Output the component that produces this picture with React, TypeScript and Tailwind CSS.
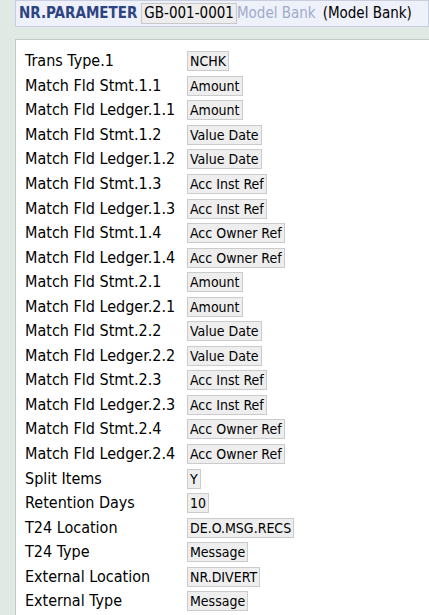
import React from "react";

const rows: [string, string][] = [
  ["Trans Type.1", "NCHK"],
  ["Match Fld Stmt.1.1", "Amount"],
  ["Match Fld Ledger.1.1", "Amount"],
  ["Match Fld Stmt.1.2", "Value Date"],
  ["Match Fld Ledger.1.2", "Value Date"],
  ["Match Fld Stmt.1.3", "Acc Inst Ref"],
  ["Match Fld Ledger.1.3", "Acc Inst Ref"],
  ["Match Fld Stmt.1.4", "Acc Owner Ref"],
  ["Match Fld Ledger.1.4", "Acc Owner Ref"],
  ["Match Fld Stmt.2.1", "Amount"],
  ["Match Fld Ledger.2.1", "Amount"],
  ["Match Fld Stmt.2.2", "Value Date"],
  ["Match Fld Ledger.2.2", "Value Date"],
  ["Match Fld Stmt.2.3", "Acc Inst Ref"],
  ["Match Fld Ledger.2.3", "Acc Inst Ref"],
  ["Match Fld Stmt.2.4", "Acc Owner Ref"],
  ["Match Fld Ledger.2.4", "Acc Owner Ref"],
  ["Split Items", "Y"],
  ["Retention Days", "10"],
  ["T24 Location", "DE.O.MSG.RECS"],
  ["T24 Type", "Message"],
  ["External Location", "NR.DIVERT"],
  ["External Type", "Message"],
  ["", "\u00a0"],
];

export default function App() {
  return (
    <div
      className="w-[429px] h-[615px] overflow-hidden bg-[#e1e9e5] text-[14px] text-black"
      style={{ fontFamily: '"DejaVu Sans Condensed", "DejaVu Sans", sans-serif' }}
    >
      <div className="ml-[15px] h-[27px] flex items-center bg-[#eef0fa] border border-[#c9cede] pl-[3px] text-[15px]">
        <span className="font-bold text-[#2d4483]">NR.PARAMETER</span>
        <span className="ml-[4px] px-[2px] h-[21px] leading-[19px] bg-[#ededed] border border-[#c8c8c8]">GB-001-0001</span>
        <span className="text-[#a0abcc]">Model Bank</span>
        <span className="ml-[7px]">(Model Bank)</span>
      </div>
      <div className="ml-[15px] mt-[12px] bg-white border-l border-t border-[#c4c8c8] pt-[9px] pl-[9px] h-[600px]">
        {rows.map(([l, v], i) => (
          <div key={i} className="flex items-center h-[24.55px]">
            <div className="w-[162px] shrink-0 text-[16px]">{l}</div>
            {v && (
              <span className="h-[20px] leading-[18px] px-[2px] bg-[#eeeeee] border border-[#cbcbcb]">{v}</span>
            )}
          </div>
        ))}
      </div>
    </div>
  );
}
